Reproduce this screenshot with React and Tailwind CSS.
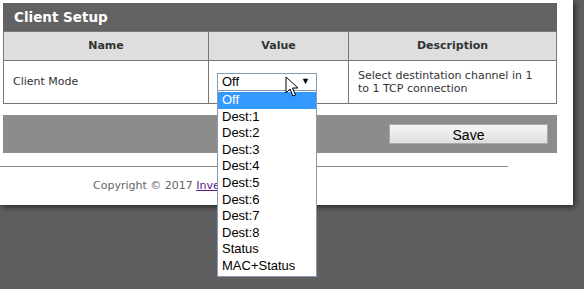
import React from 'react';

const options = ['Off', 'Dest:1', 'Dest:2', 'Dest:3', 'Dest:4', 'Dest:5', 'Dest:6', 'Dest:7', 'Dest:8', 'Status', 'MAC+Status'];

function Cursor() {
  return (
    <svg className="absolute left-[285px] top-[76px]" width="14" height="22" viewBox="0 0 14 22">
      <path d="M1 1 L1 17 L5 13 L8 20 L10.5 19 L7.5 12 L13 12 Z" fill="#fff" stroke="#000" strokeWidth="1" strokeLinejoin="round" />
    </svg>
  );
}

export default function App() {
  return (
    <div className="relative h-[289px] w-[584px] overflow-hidden bg-[#5f5f5f] font-['DejaVu_Sans',sans-serif]">
      <div className="h-[205px] w-[573px] bg-white pl-[3px] pt-[3px] shadow-[2px_2px_6px_rgba(0,0,0,0.6)]">
        <div className="flex h-[28px] w-[554px] items-center bg-[#626262] pl-[11px] text-[13.5px] font-bold text-white">
          Client Setup
        </div>
        <table className="w-[554px] table-fixed border-collapse text-[11px] text-[#333]">
          <thead>
            <tr className="h-[29px] bg-[#dedede]">
              <th className="w-[205px] border border-[#777] font-bold">Name</th>
              <th className="w-[140px] border border-[#777] font-bold">Value</th>
              <th className="border border-[#777] font-bold">Description</th>
            </tr>
          </thead>
          <tbody>
            <tr className="h-[43px]">
              <td className="border border-[#777] pl-[9px]">Client Mode</td>
              <td className="border border-[#777] pl-[8px]">
                <div className="flex h-[18px] w-[100px] items-center justify-between border border-[#7f9db9] bg-white pl-[4px] pr-[6px] font-['Liberation_Sans',sans-serif] text-[13px] text-black">
                  <span>Off</span>
                  <span className="text-[9px]">▼</span>
                </div>
              </td>
              <td className="border border-[#777] pl-[9px] pr-[4px] leading-[13px]">
                Select destintation channel in 1<br />to 1 TCP connection
              </td>
            </tr>
          </tbody>
        </table>
        <div className="mt-[11px] flex h-[38px] w-[554px] items-center justify-end bg-[#8c8c8c] pr-[9px]">
          <button className="h-[20px] w-[159px] border border-[#aaa] bg-gradient-to-b from-[#f6f6f6] to-[#dedede] font-['Liberation_Sans',sans-serif] text-[14px] text-black">
            Save
          </button>
        </div>
        <div className="-ml-[3px] mt-[13px] h-px w-[508px] bg-[#888]" />
        <div className="pl-[90px] pt-[11px] text-[11px] text-[#666]">
          Copyright © 2017 <span className="text-[#551a8b] underline">Inventia Technology</span>
        </div>
      </div>
      <ul className="absolute left-[217px] top-[90px] w-[100px] border border-[#8a98b4] bg-white py-px font-['Liberation_Sans',sans-serif] text-[13px] text-black">
        {options.map((o, i) => (
          <li key={o} className={`h-[16.6px] pl-[4px] leading-[16.6px] ${i === 0 ? 'bg-[#3399ff] text-white' : ''}`}>
            {o}
          </li>
        ))}
      </ul>
      <Cursor />
    </div>
  );
}
